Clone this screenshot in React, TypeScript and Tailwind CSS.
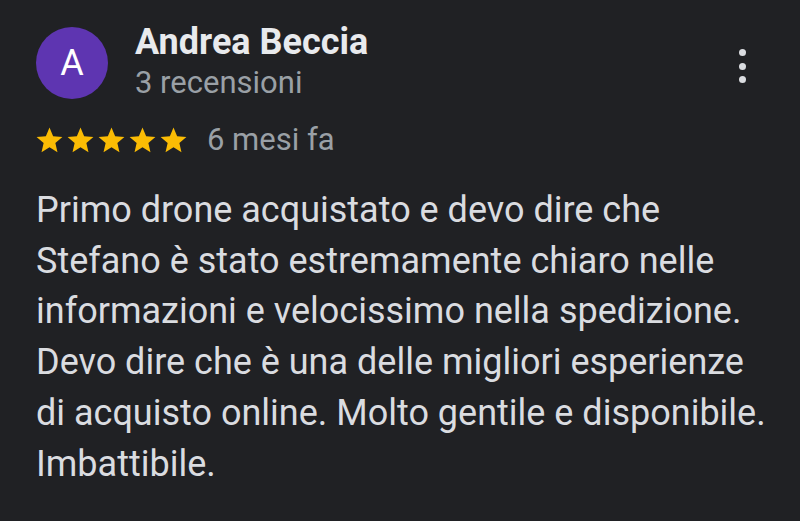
import React from "react";

const Star = () => (
  <svg width="31" height="31" viewBox="0 0 24 24">
    <path d="M12 17.27L18.18 21l-1.64-7.03L22 9.24l-7.19-.61L12 2 9.19 8.63 2 9.24l5.46 4.73L5.82 21z" fill="#fbbc04" />
  </svg>
);

export default function App() {
  return (
    <div className="w-[800px] h-[521px] bg-[#202124] overflow-hidden" style={{ fontFamily: "Roboto, 'Noto Sans', sans-serif" }}>
      <div className="pl-[36px] pr-[30px] pt-[27px]">
        <div className="flex items-start">
          <div className="w-[72px] h-[72px] rounded-full bg-[#5e35b1] flex items-center justify-center text-white text-[36px] leading-none">A</div>
          <div className="ml-[27px] flex-1 -mt-[2px]">
            <div className="text-[#e8eaed] text-[36px] font-bold leading-[34px]">Andrea Beccia</div>
            <div className="text-[#9aa0a6] text-[31px] leading-[40px] mt-[4px]">3 recensioni</div>
          </div>
          <div className="flex flex-col gap-[6.5px] mt-[22px] mr-[24px]">
            <div className="w-[7px] h-[7px] rounded-full bg-[#dadce0]" />
            <div className="w-[7px] h-[7px] rounded-full bg-[#dadce0]" />
            <div className="w-[7px] h-[7px] rounded-full bg-[#dadce0]" />
          </div>
        </div>
        <div className="flex items-center mt-[20px]">
          <div className="flex -ml-[2px]">
            <Star /><Star /><Star /><Star /><Star />
          </div>
          <span className="ml-[18px] text-[#9aa0a6] text-[31px] leading-[34px]">6 mesi fa</span>
        </div>
        <p className="mt-[28px] text-[#dadce0] text-[36px] leading-[50.7px] w-[740px]">
          Primo drone acquistato e devo dire che Stefano è stato estremamente chiaro nelle informazioni e velocissimo nella spedizione. Devo dire che è una delle migliori esperienze di acquisto online. Molto gentile e disponibile. Imbattibile.
        </p>
      </div>
    </div>
  );
}
